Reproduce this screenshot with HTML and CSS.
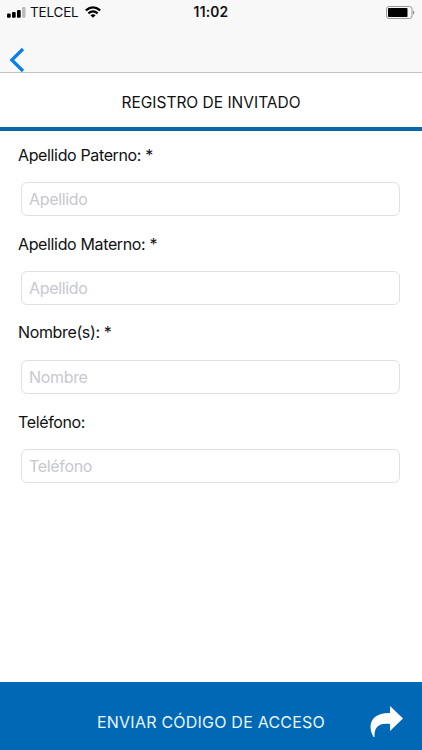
FILE: index.html
```html
<!DOCTYPE html>
<html lang="es"><head><meta charset="utf-8"><title>Registro de invitado</title><link rel="stylesheet" href="styles.css"></head>
<body>
<header class="top">
<div class="status">
<div class="carrier"><svg width="19" height="11" viewBox="0 0 19 11"><rect x="0" y="6.5" width="3.7" height="4.2" rx="1"/><rect x="5" y="5" width="3.7" height="5.7" rx="1"/><rect x="10" y="3" width="3.7" height="7.7" rx="1"/><rect x="15" y="0" width="3.5" height="10.7" rx="1" fill="#bbb"/></svg><span class="name">TELCEL</span><svg class="wifi" width="16" height="12" viewBox="0 0 16 12"><g fill="none" stroke="#000" stroke-width="2.2"><path d="M.8 4.4Q8-1.8 15.2 4.4"/><path d="M3.4 7.3Q8 3.3 12.6 7.3"/></g><path d="M5.4 9.2Q8 7.2 10.6 9.2L8 11.8Z"/></svg></div>
<time>11:02</time>
<svg class="battery" width="29" height="13" viewBox="0 0 29 13"><rect x=".5" y=".5" width="25.5" height="12" rx="2.5" fill="none" stroke="#999"/><rect x="2" y="2" width="19.5" height="9" rx=".8"/><path d="M27 4.2Q29.5 6.5 27 8.8Z" fill="#888"/></svg>
</div>
<svg class="back" width="16" height="26" viewBox="0 0 16 26"><path d="M14 2L2.8 13L14 24" fill="none" stroke="#087eed" stroke-width="3.2"/></svg>
</header>
<h1><span>REGISTRO DE INVITADO</span></h1>
<form>
<label><span>Apellido Paterno: *</span><input placeholder="Apellido"></label>
<label><span>Apellido Materno: *</span><input placeholder="Apellido"></label>
<label class="name-field"><span>Nombre(s): *</span><input placeholder="Nombre"></label>
<label><span>Teléfono:</span><input placeholder="Teléfono"></label>
</form>
<footer><span>ENVIAR CÓDIGO DE ACCESO</span><svg width="34" height="34" viewBox="0 0 34 34"><path d="M20 1V8C8 7.500 .5 13 .5 22C.5 26 2 29 3.500 32H4.500C4 22 9 17.500 20 19V26L33 13.500Z" fill="#fff"/></svg></footer>
</body></html>
```
FILE: styles.css
```css
*{box-sizing:border-box}
body{margin:0;width:422px;height:750px;display:flex;flex-direction:column;background:#fff;font:16px Inter,sans-serif;color:#111;overflow:hidden}
.top{height:73px;background:#f8f8f8;border-bottom:1px solid #c2c2c2}
.status{height:24px;display:grid;grid-template-columns:1fr auto 1fr;align-items:center;padding:0 7px}
.carrier{display:flex;align-items:center;gap:4px;font-size:13.5px;letter-spacing:-.2px}
.wifi{margin-left:2px}
time{font-size:13.8px;font-weight:600;letter-spacing:.2px}
.battery{justify-self:end}
.back{display:block;margin:23px 0 0 9px}
h1{height:58px;margin:0;padding-top:5px;display:flex;align-items:center;justify-content:center;border-bottom:4px solid #0868ae;font-size:15.5px;font-weight:400}
form{padding:14px 22px 0 21px;flex:1}
label{display:block;height:89px}
label span{display:block;width:max-content;height:20px;line-height:20px;margin-left:-3px;letter-spacing:-.36px}
.name-field{height:90px}
.name-field span{margin-top:-1px;margin-bottom:18px}
input{display:block;width:100%;height:34px;margin-top:17px;border:1px solid #e0e0e2;border-radius:6px;padding:0 7px;font:inherit;letter-spacing:-.33px;background:#fff}
.name-field input{margin-top:0}
input::placeholder{color:#c8c8cd;opacity:1}
footer{height:68px;background:#0068b4;color:#e9f5ff;display:grid;grid-template-columns:1fr auto 1fr;align-items:center;padding:11px 18px 0}
footer span{grid-column:2;letter-spacing:.22px}
footer svg{justify-self:end}
```
